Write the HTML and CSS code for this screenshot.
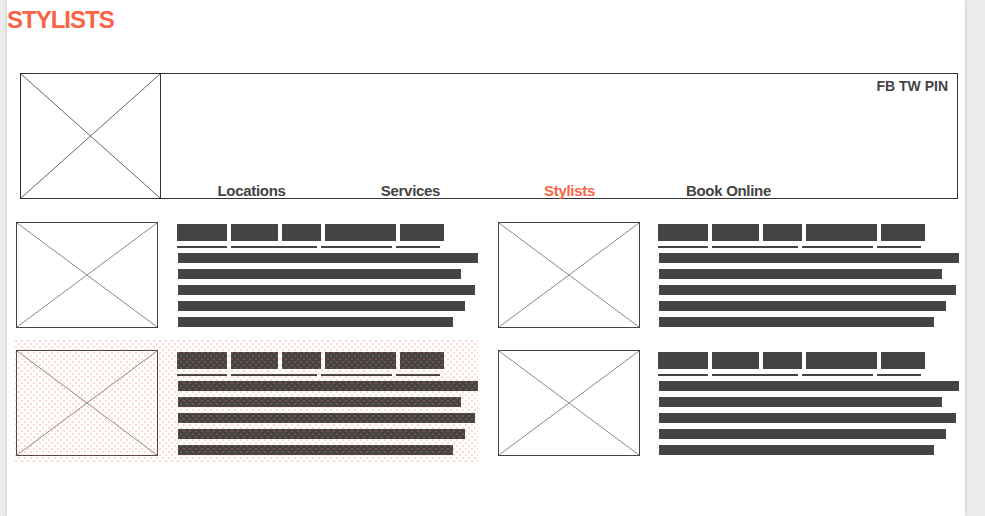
FILE: index.html
```html
<!doctype html>
<html lang="en">
<head>
  <meta charset="utf-8">
  <title>Stylists</title>
  <link rel="stylesheet" href="styles.css">
</head>
<body>
  <div class="page">
    <h1 class="title">STYLISTS</h1>

    <div class="header">
      <div class="header-img">
        <svg width="100%" height="100%" preserveAspectRatio="none" viewBox="0 0 100 100">
          <line x1="0" y1="0" x2="100" y2="100" stroke="#666" stroke-width="1" vector-effect="non-scaling-stroke"/>
          <line x1="100" y1="0" x2="0" y2="100" stroke="#666" stroke-width="1" vector-effect="non-scaling-stroke"/>
        </svg>
      </div>
      <div class="header-main">
        <div class="social">FB TW PIN</div>
        <div class="nav">
          <a href="#">Locations</a>
          <a href="#">Services</a>
          <a href="#" class="active">Stylists</a>
          <a href="#">Book Online</a>
        </div>
      </div>
    </div>

    <div class="cards">
      <div class="card">
        <div class="card-img">
          <svg width="100%" height="100%" preserveAspectRatio="none" viewBox="0 0 100 100">
            <line x1="0" y1="0" x2="100" y2="100" stroke="#888" stroke-width="1" vector-effect="non-scaling-stroke"/>
            <line x1="100" y1="0" x2="0" y2="100" stroke="#888" stroke-width="1" vector-effect="non-scaling-stroke"/>
          </svg>
        </div>
        <div class="card-text">
          <div class="words"><span class="w1"></span><span class="w2"></span><span class="w3"></span><span class="w4"></span><span class="w5"></span></div>
          <div class="links"><span class="u1"></span><span class="u2"></span><span class="u3"></span><span class="u4"></span></div>
          <div class="line l1"></div>
          <div class="line l2"></div>
          <div class="line l3"></div>
          <div class="line l4"></div>
          <div class="line l5"></div>
        </div>
      </div>

      <div class="card card-right">
        <div class="card-img">
          <svg width="100%" height="100%" preserveAspectRatio="none" viewBox="0 0 100 100">
            <line x1="0" y1="0" x2="100" y2="100" stroke="#888" stroke-width="1" vector-effect="non-scaling-stroke"/>
            <line x1="100" y1="0" x2="0" y2="100" stroke="#888" stroke-width="1" vector-effect="non-scaling-stroke"/>
          </svg>
        </div>
        <div class="card-text">
          <div class="words"><span class="w1"></span><span class="w2"></span><span class="w3"></span><span class="w4"></span><span class="w5"></span></div>
          <div class="links"><span class="u1"></span><span class="u2"></span><span class="u3"></span><span class="u4"></span></div>
          <div class="line l1"></div>
          <div class="line l2"></div>
          <div class="line l3"></div>
          <div class="line l4"></div>
          <div class="line l5"></div>
        </div>
      </div>

      <div class="card card-selected">
        <div class="card-img">
          <svg width="100%" height="100%" preserveAspectRatio="none" viewBox="0 0 100 100">
            <line x1="0" y1="0" x2="100" y2="100" stroke="#888" stroke-width="1" vector-effect="non-scaling-stroke"/>
            <line x1="100" y1="0" x2="0" y2="100" stroke="#888" stroke-width="1" vector-effect="non-scaling-stroke"/>
          </svg>
        </div>
        <div class="card-text">
          <div class="words"><span class="w1"></span><span class="w2"></span><span class="w3"></span><span class="w4"></span><span class="w5"></span></div>
          <div class="links"><span class="u1"></span><span class="u2"></span><span class="u3"></span><span class="u4"></span></div>
          <div class="line l1"></div>
          <div class="line l2"></div>
          <div class="line l3"></div>
          <div class="line l4"></div>
          <div class="line l5"></div>
        </div>
      </div>

      <div class="card card-right">
        <div class="card-img">
          <svg width="100%" height="100%" preserveAspectRatio="none" viewBox="0 0 100 100">
            <line x1="0" y1="0" x2="100" y2="100" stroke="#888" stroke-width="1" vector-effect="non-scaling-stroke"/>
            <line x1="100" y1="0" x2="0" y2="100" stroke="#888" stroke-width="1" vector-effect="non-scaling-stroke"/>
          </svg>
        </div>
        <div class="card-text">
          <div class="words"><span class="w1"></span><span class="w2"></span><span class="w3"></span><span class="w4"></span><span class="w5"></span></div>
          <div class="links"><span class="u1"></span><span class="u2"></span><span class="u3"></span><span class="u4"></span></div>
          <div class="line l1"></div>
          <div class="line l2"></div>
          <div class="line l3"></div>
          <div class="line l4"></div>
          <div class="line l5"></div>
        </div>
      </div>
    </div>
  </div>
</body>
</html>
```

FILE: styles.css
```css
* {
  box-sizing: border-box;
}

body {
  margin: 0;
  background: #ececec;
  font-family: 'Liberation Sans', Arial, sans-serif;
  color: #444;
}

.page {
  margin-left: 7px;
  width: 958px;
  min-height: 516px;
  background: #fff;
  box-shadow: 0 0 3px rgba(0,0,0,0.22);
  overflow: hidden;
}

.title {
  margin: 0;
  padding-top: 7px;
  font-size: 24px;
  line-height: 25px;
  letter-spacing: -1px;
  font-weight: bold;
  color: #f96346;
}

.header {
  display: flex;
  margin: 41px 0 0 13px;
  width: 938px;
  height: 126px;
  border: 1px solid #333;
}

.header-img {
  width: 140px;
  height: 100%;
  border-right: 1px solid #333;
}

.header-img svg,
.card-img svg {
  display: block;
}

.header-main {
  flex: 1;
  display: flex;
  flex-direction: column;
  justify-content: space-between;
}

.social {
  text-align: right;
  padding: 4px 9px 0 0;
  font-size: 14px;
  line-height: 16px;
  font-weight: bold;
}

.nav {
  display: flex;
  padding-left: 11px;
}

.nav a {
  width: 159px;
  text-align: center;
  font-size: 15px;
  line-height: 13px;
  letter-spacing: -0.3px;
  font-weight: bold;
  color: #444;
  text-decoration: none;
  position: relative;
  top: -1px;
}

.nav a.active {
  color: #f96346;
}

.cards {
  display: grid;
  grid-template-columns: 463px 463px;
  column-gap: 19px;
  row-gap: 6px;
  margin: 13px 0 0 8px;
}

.card {
  position: relative;
  display: flex;
  gap: 19px;
  padding: 10px 0 6px 1px;
}

.card-right {
  gap: 18px;
}

.card-img {
  flex: none;
  width: 142px;
  height: 106px;
  border: 1px solid #444;
}

.card-text {
  padding-top: 2px;
}

.words,
.links {
  display: flex;
  gap: 4px;
}

.words span {
  height: 17px;
  background: #444;
}

.links {
  margin-top: 5px;
}

.links span {
  height: 2px;
  background: #444;
}

.w1 { width: 50px; }
.w2 { width: 47px; }
.w3 { width: 39px; }
.w4 { width: 71px; }
.w5 { width: 44px; }

.u1 { width: 50px; }
.u2 { width: 86px; }
.u3 { width: 71px; }
.u4 { width: 44px; }

.line {
  height: 10px;
  margin: 6px 0 0 1px;
  background: #444;
}

.links + .line {
  margin-top: 5px;
}

.l1 { width: 300px; }
.l2 { width: 283px; }
.l3 { width: 297px; }
.l4 { width: 287px; }
.l5 { width: 275px; }

.card-selected::after {
  content: '';
  position: absolute;
  inset: 0;
  pointer-events: none;
  background-image:
    radial-gradient(circle at 1px 1px, rgba(255,110,90,0.28) 0.9px, transparent 1.2px),
    radial-gradient(circle at 1px 1px, rgba(255,110,90,0.28) 0.9px, transparent 1.2px);
  background-size: 6px 6px;
  background-position: 0 0, 3px 3px;
}
```
